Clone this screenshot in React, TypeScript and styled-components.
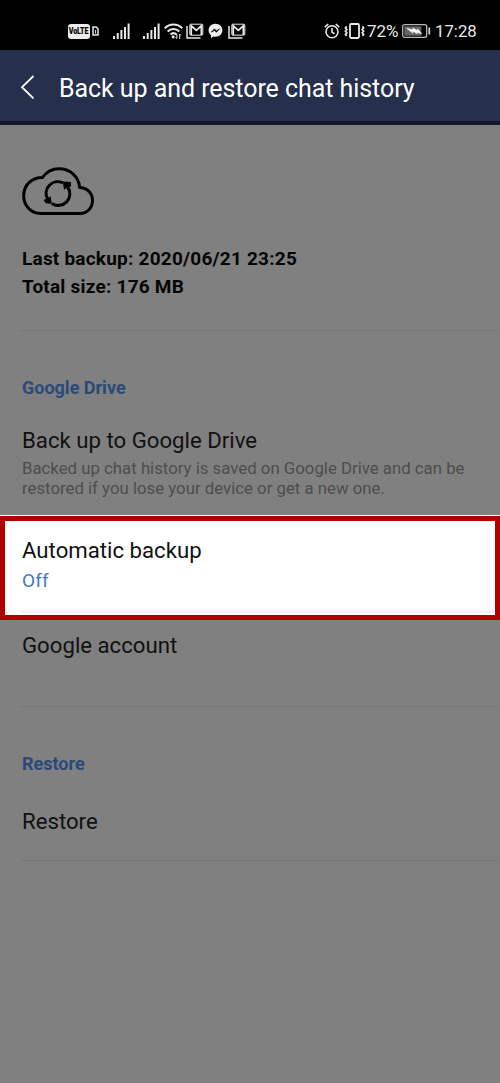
import React from "react";
import styled, { createGlobalStyle } from "styled-components";

const GlobalStyle = createGlobalStyle`
  * { box-sizing: border-box; }
  html, body { margin: 0; padding: 0; background: #808080; }
  body { font-family: Roboto, "Liberation Sans", sans-serif; }
  svg { display: block; flex: none; }
`;

const Screen = styled.main`
  width: 500px;
  height: 1083px;
  overflow: hidden;
  background: #808080;
`;

const StatusBar = styled.div`
  display: flex;
  justify-content: space-between;
  align-items: center;
  height: 50px;
  padding: 12px 23px 0 68px;
  background: #000;
  color: #e8e8e8;
`;

const StatusGroup = styled.div`
  display: flex;
  align-items: center;
`;

const StatusText = styled.span<{ $gap?: number; $size: number; $width: number }>`
  margin-left: ${(p) => p.$gap ?? 0}px;
  width: ${(p) => p.$width}px;
  font-size: ${(p) => p.$size}px;
  line-height: 20px;
  white-space: nowrap;
`;

const VolteBadge = styled.span`
  display: flex;
  align-items: center;
  justify-content: center;
  width: 22px;
  height: 15px;
  border-radius: 3px;
  background: #ececec;
  color: #000;
  font: 900 8.5px/15px Roboto, sans-serif;
`;

const VolteText = styled.span`
  letter-spacing: -0.2px;
  transform: scale(0.84, 1.15);
`;

const Spacer = styled.span<{ $w: number }>`
  width: ${(p) => p.$w}px;
`;

const Header = styled.header`
  display: flex;
  align-items: center;
  height: 75px;
  padding: 3px 0 0 20px;
  background: #262f4b;
  border-bottom: 4px solid #141a28;
  color: #fff;
`;

const Title = styled.h1`
  margin: 3px 0 0 23px;
  font-size: 25px;
  font-weight: 400;
  line-height: 32px;
  letter-spacing: -0.06px;
  white-space: nowrap;
`;

const Summary = styled.section`
  height: 206px;
  margin-left: 21px;
  padding: 41px 0 0 1px;
  border-bottom: 1px solid #767676;
`;

const SummaryText = styled.p`
  margin: 29px 0 0;
  color: #050505;
  font-size: 19px;
  font-weight: 700;
  line-height: 28px;
  letter-spacing: 0.22px;
  white-space: nowrap;
`;

const Heading = styled.h2<{ $top: number }>`
  margin: 0;
  padding: ${(p) => p.$top}px 0 0 22px;
  color: #2b4a76;
  font-size: 18px;
  font-weight: 700;
  line-height: 24px;
`;

const Row = styled.div<{ $height: number; $top: number; $line?: boolean }>`
  height: ${(p) => p.$height}px;
  margin-left: 21px;
  padding: ${(p) => p.$top}px 0 0 1px;
  border-bottom: ${(p) => (p.$line ? "1px solid #767676" : "none")};
`;

const RowTitle = styled.div`
  color: #111;
  font-size: 22.2px;
  line-height: 28px;
  white-space: nowrap;
`;

const Description = styled.p`
  margin: 4px 0 0;
  color: #4d4d4d;
  font-size: 16.8px;
  line-height: 20px;
  white-space: nowrap;
`;

const Highlight = styled.div`
  height: 105px;
  border-top: 1px solid #fff;
  background: #fff;
`;

const HighlightFrame = styled.div`
  height: 104px;
  border: 5px solid #b10000;
  padding: 15px 0 2px 16px;
`;

const HighlightRow = styled.div`
  height: 77px;
  padding-left: 1px;
  border-bottom: 2px solid #f2f2f6;
`;

const Value = styled.div`
  margin-top: 4px;
  color: #4878bd;
  font-size: 19px;
  line-height: 26px;
  letter-spacing: 0.2px;
`;

const SimCard = () => (
  <svg width="7" height="10" viewBox="0 0 7 10">
    <path d="M1 1h3.2L6 3v6H1z" fill="none" stroke="#e8e8e8" strokeWidth="1.5" />
    <path d="M3.6 4v3.6" stroke="#e8e8e8" />
  </svg>
);

const Signal = () => (
  <svg width="17" height="16" viewBox="0 0 17 16" fill="#e8e8e8">
    <rect x="0" y="13" width="2" height="3" />
    <rect x="3.7" y="10" width="2" height="6" />
    <rect x="7.4" y="7" width="2" height="9" />
    <rect x="11" y="4" width="2" height="12" />
    <rect x="14.6" y="0.5" width="2" height="15.5" />
  </svg>
);

const Wifi = () => (
  <svg width="19" height="16" viewBox="0 0 19 16" fill="none" stroke="#e8e8e8" strokeWidth="2">
    <path d="M.7 5.2C5.8.2 13.2.2 18.3 5.2M3.6 8.4c3.5-3.3 8.3-3.3 11.8 0M6.4 11.4c1.9-1.6 4.3-1.6 6.2 0" />
    <circle cx="9.2" cy="13.8" r="1.6" fill="#e8e8e8" stroke="none" />
    <path d="M12.8 11v4.5m-1.2-1.3 1.2 1.5M15.7 16v-5m1.3 1.4L15.7 11" strokeWidth="1" />
  </svg>
);

const Mail = () => (
  <svg width="18" height="16" viewBox="0 0 18 16" fill="none" stroke="#e8e8e8">
    <path d="M1 3v12h13.5" strokeWidth="1.5" />
    <rect x="3.8" y="1.2" width="13" height="11" rx="1" strokeWidth="1" />
    <path d="M5.2 12V2.8l5.1 4.5 5.1-4.5V12" strokeWidth="1.8" />
  </svg>
);

const Messenger = () => (
  <svg width="15" height="16" viewBox="0 0 15 16">
    <path d="M7.5.8C3.6.8.6 3.6.6 7.3c0 2 .9 3.8 2.4 5v2.8l2.6-1.5c.6.2 1.2.2 1.9.2 3.9 0 6.9-2.8 6.9-6.5S11.4.8 7.5.8z" fill="#ededed" />
    <path d="m3.2 9.2 3.2-3.3 2 1.9 3.2-2-3.2 3.5-2-1.9z" fill="#000" stroke="#000" strokeWidth=".6" />
  </svg>
);

const Alarm = () => (
  <svg width="16" height="16" viewBox="0 0 16 16" fill="none" stroke="#e8e8e8" strokeWidth="1.6">
    <circle cx="8" cy="8.7" r="6" />
    <path d="M.8 4.2 4.2 1M15.2 4.2 11.8 1M8 5v4l2.5 1.8" />
  </svg>
);

const Vibrate = () => (
  <svg width="21" height="16" viewBox="0 0 21 16" fill="none" stroke="#e8e8e8" strokeWidth="1.8">
    <rect x="6" y="1" width="9" height="14" rx="1.2" />
    <path d="M2.8 3.4 1.4 5l1.4 1.6-1.4 1.6 1.4 1.6-1.4 1.6 1.3 1.4M18.3 3.4 19.6 5l-1.4 1.6 1.4 1.6-1.4 1.6 1.4 1.6-1.3 1.4" strokeWidth="1.7" />
  </svg>
);

const Battery = () => (
  <svg width="29" height="14" viewBox="0 0 29 14">
    <rect x=".7" y=".7" width="24" height="12.6" rx="2" fill="none" stroke="#b8b8b8" strokeWidth="1.3" />
    <rect x="2.3" y="2.3" width="17" height="9.4" fill="#666" />
    <path d="m4.8 4.2 6 5-.3-2.2 4.8 2.8-.3-1.8 4.8 2-4.3-5.2v2L11 3.9v2z" fill="#fff" stroke="#fff" strokeWidth=".5" />
    <path d="M27.3 3.5v7" stroke="#d8d8d8" strokeWidth="1.7" />
  </svg>
);

const BackArrow = () => (
  <svg width="16" height="24" viewBox="0 0 16 24">
    <path d="M13.5 1 2 12.2 13.5 23.5" fill="none" stroke="#fff" strokeWidth="1.8" />
  </svg>
);

const CloudSync = () => (
  <svg width="73" height="50" viewBox="0 0 73 50" fill="none" stroke="#000" strokeWidth="3">
    <path d="M18.5 47.5C8.8 47.5 1.7 39.5 1.7 29.7 1.7 19.4 9.5 11.2 20.5 11.4 24.5 6 30 2.8 37 2.8c10.8 0 19.5 7.2 20.7 18.7C65.3 21.7 70.5 27.4 70.5 34.4c0 7.5-5.3 13.1-12.7 13.1z" strokeLinejoin="round" />
    <path d="M40.8 17A11.6 11.6 0 0 0 25.7 33.3M29.8 37.4A11.6 11.6 0 0 0 45.7 21" />
    <path d="m40.8 15.6 1.2 8.2 3-2.2 4.2-1.4-.4-4.3zM29.5 37.7l-.6-7.1-7.3 3.5 2.2 3.2 4.6.5z" fill="#000" stroke="none" />
  </svg>
);

export default function App() {
  return (
    <Screen>
      <GlobalStyle />
      <StatusBar>
        <StatusGroup>
          <VolteBadge>
            <VolteText>VoLTE</VolteText>
          </VolteBadge>
          <Spacer $w={2} />
          <SimCard />
          <Spacer $w={14} />
          <Signal />
          <Spacer $w={13} />
          <Signal />
          <Spacer $w={4} />
          <Wifi />
          <Spacer $w={3} />
          <Mail />
          <Spacer $w={4} />
          <Messenger />
          <Spacer $w={5} />
          <Mail />
        </StatusGroup>
        <StatusGroup>
          <Alarm />
          <Spacer $w={4} />
          <Vibrate />
          <StatusText $gap={2} $size={17} $width={31}>72%</StatusText>
          <Spacer $w={4} />
          <Battery />
          <StatusText $gap={4} $size={16.8} $width={42}>17:28</StatusText>
        </StatusGroup>
      </StatusBar>
      <Header>
        <BackArrow />
        <Title>Back up and restore chat history</Title>
      </Header>
      <Summary>
        <CloudSync />
        <SummaryText>
          Last backup: 2020/06/21 23:25
          <br />
          Total size: 176 MB
        </SummaryText>
      </Summary>
      <Heading $top={45}>Google Drive</Heading>
      <Row $height={115} $top={26}>
        <RowTitle>Back up to Google Drive</RowTitle>
        <Description>
          Backed up chat history is saved on Google Drive and can be
          <br />
          restored if you lose your device or get a new one.
        </Description>
      </Row>
      <Highlight>
        <HighlightFrame>
          <HighlightRow>
            <RowTitle>Automatic backup</RowTitle>
            <Value>Off</Value>
          </HighlightRow>
        </HighlightFrame>
      </Highlight>
      <Row $height={87} $top={11} $line>
        <RowTitle>Google account</RowTitle>
      </Row>
      <Heading $top={45}>Restore</Heading>
      <Row $height={85} $top={31} $line>
        <RowTitle>Restore</RowTitle>
      </Row>
    </Screen>
  );
}
